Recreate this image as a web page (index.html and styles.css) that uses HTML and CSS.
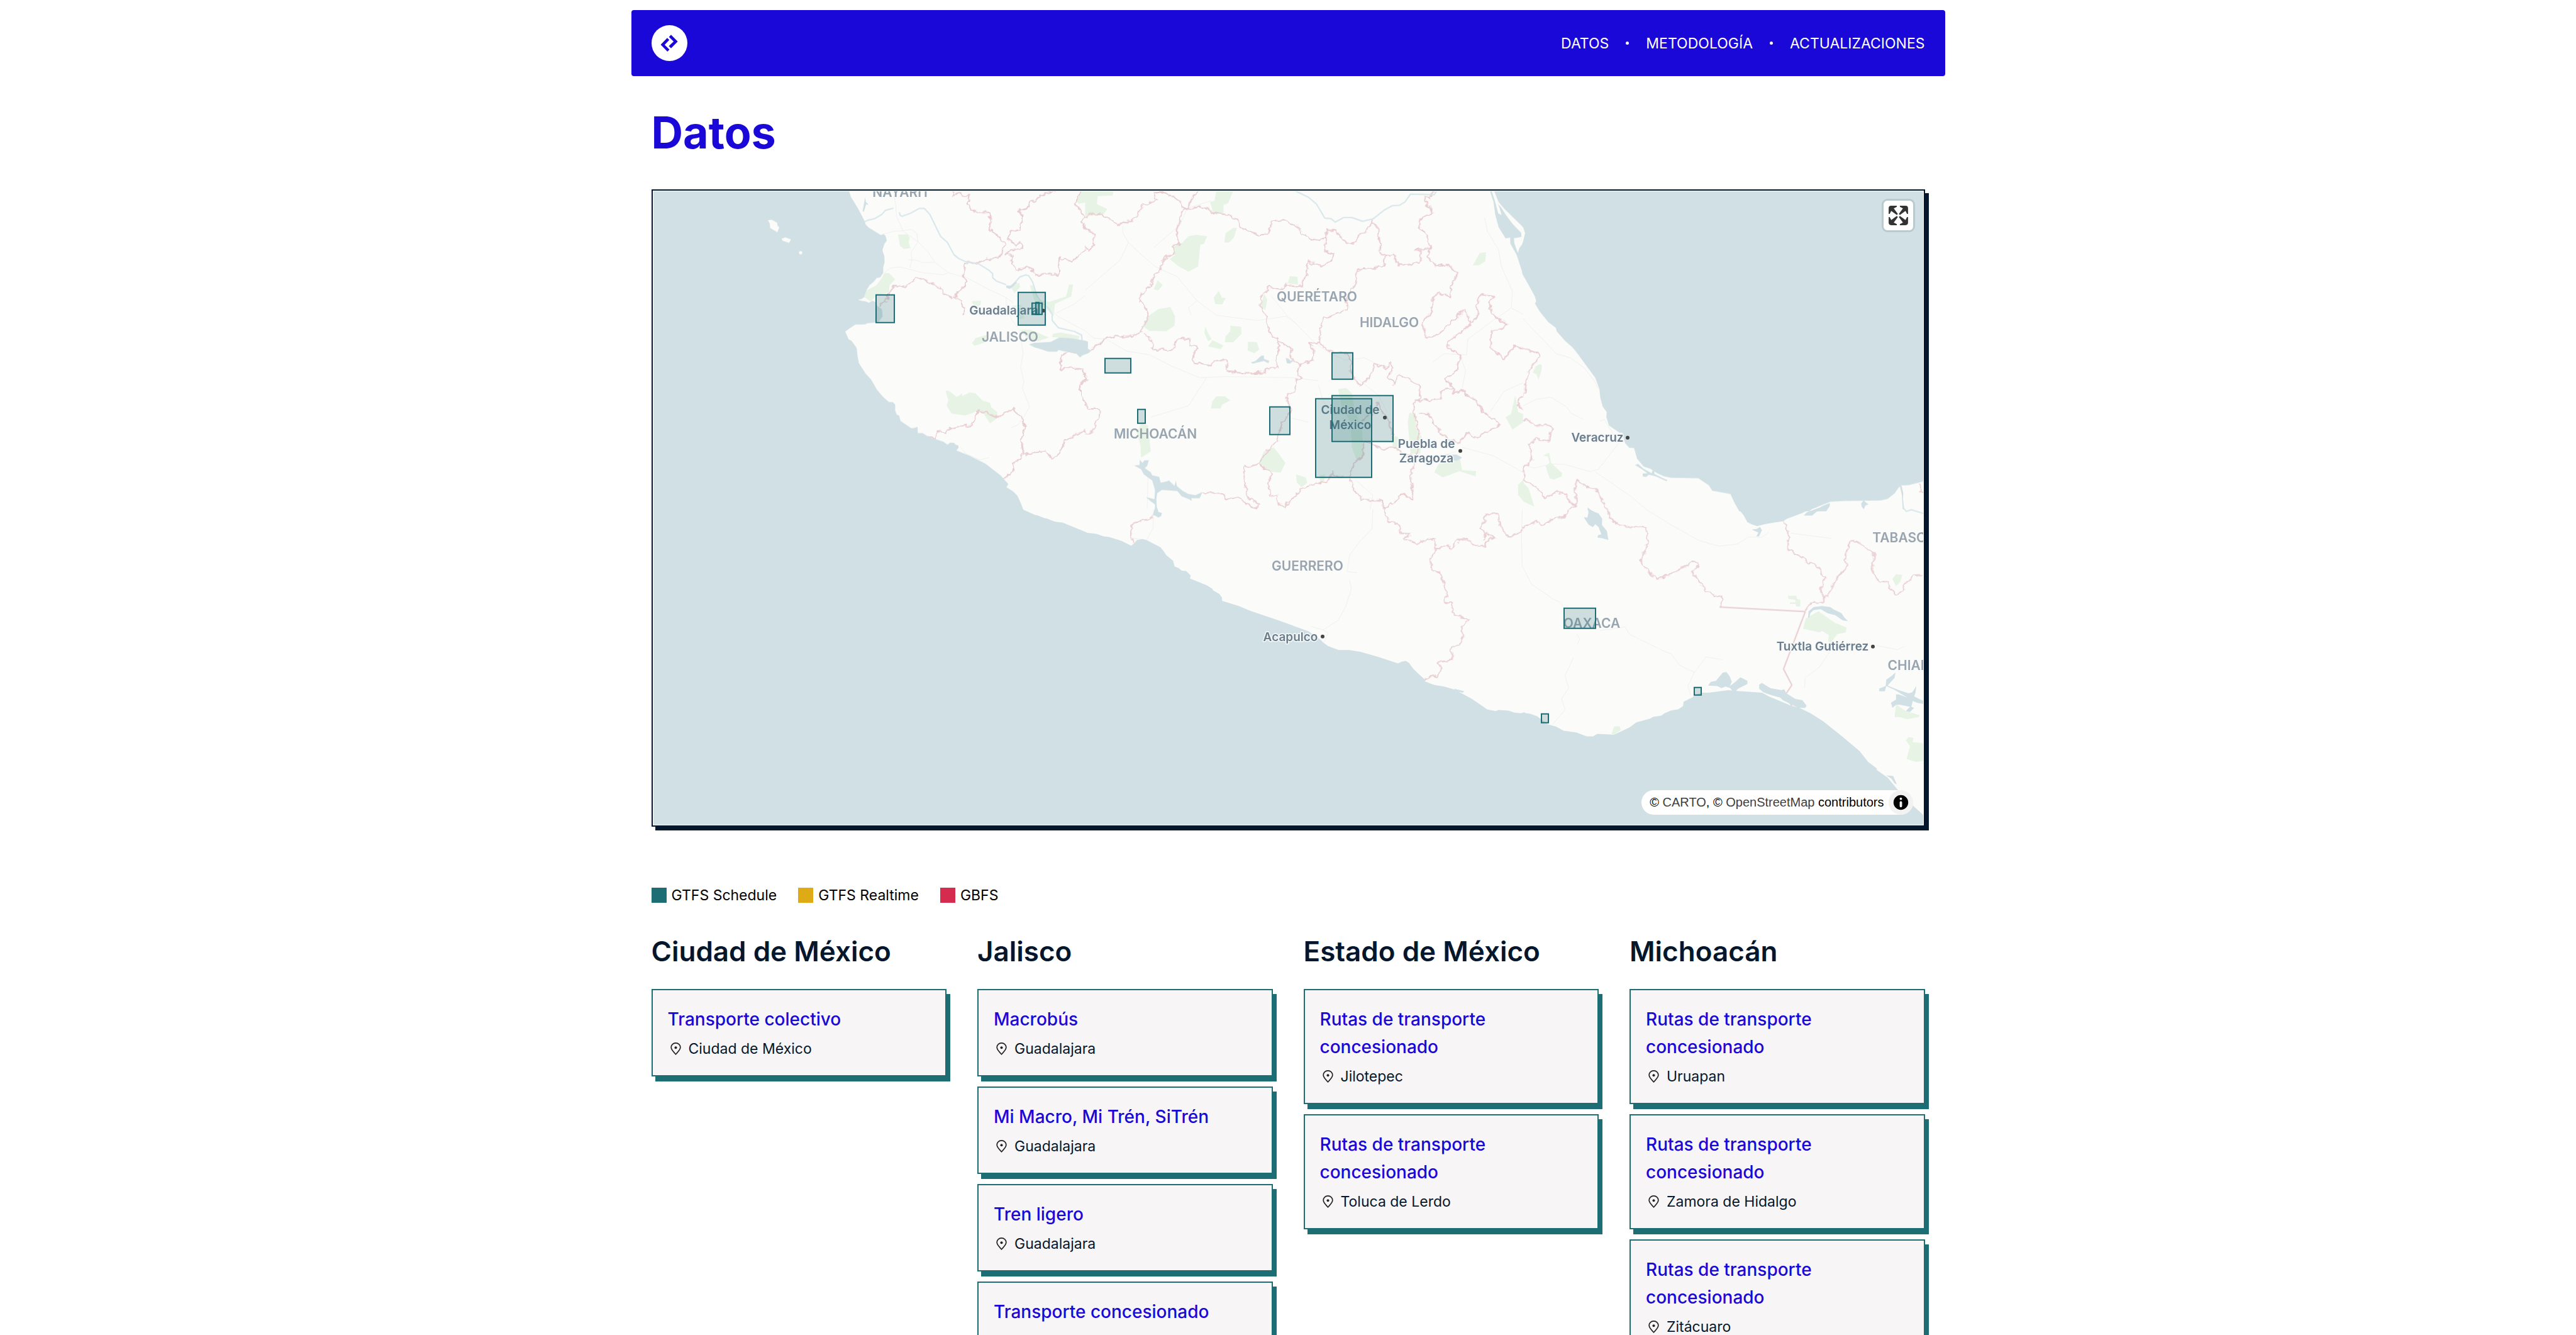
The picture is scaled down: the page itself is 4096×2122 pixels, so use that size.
FILE: index.html
```html
<!DOCTYPE html>
<html lang="es">
<head>
<meta charset="UTF-8">
<meta name="viewport" content="width=device-width, initial-scale=1.0">
<title>Datos</title>
<link rel="stylesheet" href="styles.css">
</head>
<body>

<!-- Shared icons -->
<svg class="sprite" aria-hidden="true">
  <symbol id="pin" viewBox="0 0 20 24">
    <path d="M10 22.600C7.500 19.400 1.200 14.600 1.200 9.400a8.800 8.400 0 0 1 17.600 0C18.800 14.600 12.500 19.400 10 22.600z" fill="none" stroke="#222" stroke-width="2"/>
    <circle cx="10" cy="9.800" r="2.400" fill="#222"/>
  </symbol>
</svg>

<header class="navbar">
  <a class="logo" href="#" aria-label="Inicio">
    <svg viewBox="27 30 208 208">
      <circle cx="131" cy="134" r="104" fill="#fff"/>
      <path d="M118 104l12 12-27 28 28 27-12 12-39-40z M140 86l39 39-39 39-13-13 28-26-27-27z" fill="#1908d8"/>
    </svg>
  </a>
  <nav class="menu">
    <a href="#">DATOS</a>
    <span class="dot"></span>
    <a href="#">METODOLOGÍA</a>
    <span class="dot"></span>
    <a href="#">ACTUALIZACIONES</a>
  </nav>
</header>

<main class="container">
  <h1>Datos</h1>

  <div class="map">
    <svg class="map-canvas" viewBox="1 2 2019 1007" preserveAspectRatio="xMidYMid slice">
      <defs>
        <filter id="rough" x="0" y="0" width="100%" height="100%">
          <feTurbulence type="fractalNoise" baseFrequency="0.12" numOctaves="2" result="noise"/>
          <feDisplacementMap in="SourceGraphic" in2="noise" scale="9" xChannelSelector="R" yChannelSelector="G"/>
        </filter>
      </defs>
      <rect class="land" width="2021" height="1009"/>

      <!-- Parks -->
      <g class="park">
        <g transform="translate(-8.900 -10.500) scale(.4441 .3305)">
          <path d="M898 247L932 246 940 262 936 285 943 312 918 316 905 300z M848 433L866 433 888 462 868 490 865 525 820 542 800 568 777 548 785 515 820 492 840 455z M1162 567L1195 564 1193 585 1180 597 1165 578z M1302 500L1332 478 1335 500 1315 528z M1370 492L1385 490 1400 560 1440 570 1500 545 1510 488 1525 487 1518 545 1460 580 1455 640 1430 605 1390 580z M1163 770L1175 745 1215 730 1212 765 1172 782z M1335 705L1375 705 1438 742 1400 760 1360 745z M1452 725L1480 718 1548 735 1545 752 1475 742 1450 740z M1305 590L1340 585 1350 650 1325 655z M1555 34L1570 34 1570 92 1545 98 1535 85z"/>
          <path d="M1068 998L1080 998 1108 1028 1129 1010 1127 1025 1155 1005 1175 1010 1200 1045 1228 1057 1232 1078 1253 1100 1253 1130 1227 1155 1205 1110 1180 1095 1165 1105 1137 1117 1090 1108 1072 1070 1078 1045z"/>
        </g>
        <g transform="translate(687.500 -10.500) scale(.4441 .3305)">
          <path d="M0 34L102 34 98 60 45 62 42 100 80 125 65 150 0 160z M470 34L530 36 512 95 495 105 495 145 460 147 447 90 463 85z M530 215L543 215 533 260 515 285 498 285 503 240z M370 255L400 248 437 255 425 292 412 295 405 400 370 425 335 400 303 365 320 345 312 300 345 290z M260 467L278 490 262 515 245 510z M478 518L490 550 503 553 490 583 465 580 460 550z M262 605L305 595 322 640 320 685 290 712 230 710 205 685 225 640z M430 688L440 720 453 750 440 760 427 720z M520 685L558 690 560 725 530 765 500 765 503 735 520 712z M455 755L495 780 485 798 440 785z M583 762L615 765 623 800 605 818 582 805z M733 447L760 450 762 488 725 480z M640 530L652 560 645 610 630 590z"/>
          <path d="M470 1025L500 1025 520 1045 490 1065 485 1083 450 1083 455 1050z M675 1270L695 1305 717 1345 700 1392 665 1388 622 1345 640 1290z M755 1400L790 1415 795 1440 775 1462 758 1440z M840 1405L860 1400 855 1440 840 1430z M1413 335L1435 332 1433 375 1410 395 1388 395z M1160 1105L1183 1105 1185 1180 1205 1220 1200 1300 1165 1300 1155 1150z M1340 1310L1350 1380 1400 1385 1398 1410 1340 1385 1280 1415 1250 1390 1265 1350z M1540 1020L1550 1100 1568 1110 1568 1150 1530 1185 1505 1125 1525 1110z M905 990L935 985 955 1010 965 1090 990 1180 1000 1310 970 1325 955 1270 950 1150 920 1080z M1103 1215L1120 1220 1118 1280 1100 1270z M200 1155L225 1165 235 1290 200 1320 198 1260 185 1200z M1550 1450L1570 1425 1570 1530 1550 1500z"/>
        </g>
        <g transform="translate(1383.900 -10.500) scale(.4441 .3305)">
          <path d="M60 870L67 875 65 905 55 945 48 920 35 910 45 880z M72 1310L93 1295 100 1345 140 1395 138 1410 110 1425 95 1420 80 1360 95 1345 88 1315z M0 1440L20 1468 40 1555 0 1530z"/>
        </g>
        <g transform="translate(1383.900 507.800) scale(.4441 .3305)">
          <path d="M1057 490L1115 545 1158 568 1155 593 1125 600 1100 645 1092 635 1095 605 1070 585 1062 592 1002 575 1012 525z M948 416L978 416 980 430 992 435 992 467 978 467 975 455 955 455 955 448 975 448 975 435 950 430z M1335 312L1358 315 1350 350 1335 370 1322 335z M1335 938L1370 970 1420 990 1415 1000 1375 1010 1350 1000 1330 1000z M1380 1095L1397 1100 1395 1120 1436 1125 1436 1210 1405 1215 1373 1200 1385 1140 1370 1110z M325 1045L345 1043 350 1062 325 1083 317 1080z"/>
        </g>
      </g>

      <!-- Roads -->
      <g class="road">
        <g transform="translate(-8.900 -10.500) scale(.4441 .3305)">
          <path d="M883 60L890 100 892 155 915 228 945 222 965 240 970 282 945 330 948 370 940 408 M845 245L880 232 915 228 970 282 1005 330 1030 380 1078 430 1150 458 1215 505 1285 550 1310 575 M850 430L870 408 905 403 985 430 1060 440 1078 430 M935 368L965 370 985 382 1030 380 M1285 550L1286 600 1305 655 1332 705 1346 815 1337 885 1349 955 1343 985 1369 1075 1350 1120 1330 1160 1303 1177 M1430 585L1470 640 1568 710 M1465 625L1530 580 1568 540 M1123 1270L1140 1300 1190 1330 1223 1320"/>
        </g>
        <g transform="translate(687.500 -10.500) scale(.4441 .3305)">
          <path d="M0 515L60 445 125 370 155 285 135 240 135 205 M155 285L190 330 250 400 330 450 400 565 470 635 615 660 720 640 755 675 820 765 880 820 M400 565L370 600 380 635 M0 710L30 745 75 750 150 808 230 825 310 880 410 935 500 930 740 935 835 950 M235 1125L370 1070 435 935 M665 540L725 640 760 680 M880 820L930 850 1000 840 1060 880 M835 970L850 1040 880 1110 M975 940L1050 1020 1080 1100 M1340 820L1362 900 1350 985 M1430 165L1440 230 1480 320 1490 400 1530 520 1525 600 1568 630 M1525 600L1450 670 1370 750 1365 825 1285 820 1245 860 M1350 1270L1460 1310 1568 1390 M1150 1350L1250 1320 1330 1290 M970 1430L1030 1500 1020 1568 M1568 960L1500 1000 1450 1100 M365 120L340 200 245 310 M365 120L450 85 M740 1130L800 1150 M225 1400L222 1568"/>
        </g>
        <g transform="translate(1383.900 -10.500) scale(.4441 .3305)">
          <path d="M0 650L35 705 70 750 118 820 170 840 220 890 255 950 270 990 M0 1070L50 1038 100 1030 155 1075 170 1105 215 1135 M275 1145L290 1135 320 1200 M360 1220L270 1375 240 1387 150 1353 100 1350 40 1370 0 1355 M258 1388L385 1505 440 1568"/>
        </g>
        <g transform="translate(687.500 507.800) scale(.4441 .3305)">
          <path d="M1030 0L1027 95 980 160 947 220 938 300 975 305 M947 340L953 385 932 470 905 535 852 580 870 595 855 640 M245 0L243 90 220 148 170 138 M808 563L852 580 M1565 0L1562 130 1565 280"/>
        </g>
        <g transform="translate(1383.900 507.800) scale(.4441 .3305)">
          <path d="M440 0L530 75 630 150 700 177 765 168 808 133 855 135 878 112 M0 280L30 360 105 430 135 450 145 475 M275 583L320 575 365 565 380 600 500 680 530 695 560 750 613 785 590 850 600 895 M613 785L655 710 713 723 M958 115L1105 140 M1110 660L1060 760 1010 810 1007 860 M1265 655L1340 675 1363 660 M180 715L150 800 163 860 138 910 150 965 105 1035 M192 600L203 625 193 650"/>
        </g>
      </g>

      <!-- State borders -->
      <g class="border" filter="url(#rough)">
        <g transform="translate(-8.900 -10.500) scale(.4441 .3305)">
          <path d="M1095 34L1097 58 1115 47 1135 63 1152 57 1147 105 1165 135 1222 141 1233 175 1225 220 1240 235 1282 290 1272 330 1255 363 1215 362 1190 382 1142 385 1133 440 1142 490 1118 515 1097 550 1120 560 1133 605 1129 630"/>
          <path d="M831 602L840 572 862 560 865 525 888 493 925 500 960 458 990 460 1000 477 1045 497 1065 533 1095 558"/>
          <path d="M1461 38L1425 50 1405 60 1393 83 1375 87 1355 125 1327 130 1345 155 1335 225 1300 232 1290 268 1322 300 1335 280 1345 312 1300 322 1284 340 1306 348 1300 375 1325 412 1370 405 1393 445 1425 435 1450 435 1472 437 1475 358 1520 378 1568 322"/>
          <path d="M1557 34L1530 100 1568 160 1553 185 1568 218"/>
          <path d="M1005 1218L1030 1232 1045 1190 1065 1200 1085 1180 1165 1162 1185 1090 1255 1125 1313 1085 1352 1160 1340 1250 1352 1305 1425 1288 1453 1327 1475 1300 1497 1235 1568 1190 M1352 1305L1308 1350 1313 1380 1295 1400 1278 1423"/>
          <path d="M1535 820L1510 815 1483 828 1480 895 1515 885 1558 898 1575 945 1548 970 1553 1020 1568 1045"/>
        </g>
        <g transform="translate(687.500 -10.500) scale(.4441 .3305)">
          <path d="M0 165L30 145 60 155 120 203 133 187 150 190 185 160 205 105 263 80 245 70 250 42 280 40 300 55 340 85 345 115 362 125 345 140 325 240 340 290 312 300 320 340 285 355 265 425 245 440 235 490 190 550 215 600 228 640 195 720 165 735 90 740 40 775 15 810"/>
          <path d="M362 125L380 90 385 60 405 40 M362 125L410 113 440 122 460 147 515 150 550 185 552 210 620 250 660 237 668 180 715 178 760 210 780 245 820 275 862 262 870 222 895 228 940 290 970 283 980 240 1005 235 1030 183 1048 215 1058 310 1050 330 1072 348 1105 338 1120 390 1150 395 1200 380 1203 325 1180 320 1240 310 1225 280 1225 250 1195 210 1197 180 1245 140 1225 105 1215 60 1235 70 1248 36"/>
          <path d="M862 262L858 330 890 340 880 370 848 400 800 375 790 440 775 495 720 485 705 510 660 500 630 545 628 590 650 640 658 715 690 755 695 800 683 840 690 885 650 890 645 910 575 915 510 905 505 850 465 850 450 878 390 865 385 820 403 790 375 775 370 747 330 750 310 800 245 800 228 740 210 722"/>
          <path d="M1240 310L1220 350 1260 400 1295 390 1333 430 1310 500 1308 550 1265 525 1245 560 1240 620 1205 675 1222 740 1240 742 1280 710 1360 605 1380 680 1300 760 1300 790 1345 825 1330 900 1290 940 1320 985 1275 1000 1270 1040 1185 1045"/>
          <path d="M1072 348L1070 395 1030 410 990 410 975 425 970 480 935 560 940 605 848 655 838 768 880 815 930 815 955 850 950 910 985 975 1020 930 1040 870 1080 890 1090 855 1102 890 1085 930 1105 965 1120 925 1150 930 1200 980 1195 1040 1175 1060 1180 1110 1195 1200 1190 1310 1165 1400 1175 1525 1135 1495 1120 1520 1070 1565"/>
          <path d="M838 768L805 770 818 800 815 850 770 872 735 840 740 795 695 760 M770 872L760 905 778 940 755 945 750 1000 720 1020 730 1070 742 1095 705 1150 690 1240 650 1290 620 1350 670 1395 655 1440 665 1500 685 1500 690 1535 712 1555 780 1465 870 1430 885 1390 905 1415 945 1410 965 1345 995 1310 1000 1240"/>
          <path d="M945 1410L965 1480 990 1520 1060 1525 1070 1568 M620 1350L590 1368 570 1355 568 1400 580 1510 625 1545 610 1563 570 1535 550 1508 510 1520 490 1495 475 1490 420 1487"/>
          <path d="M1380 680L1410 630 1400 600 1413 535 1465 548 1448 565 1450 600 1468 645 1510 675 1490 700 1455 710 1450 790 1500 845 1535 785 1568 790 M1000 1240L1060 1275 1105 1270 1150 1310 1185 1310"/>
          <path d="M1195 1105L1225 1105 1260 1180 1300 1230 1340 1245 1370 1200 1400 1225 1485 1160 1425 1100 1390 1030 1360 1020 1360 995 1320 1010 1320 985 M0 215L33 245 28 300 15 325 0 310 M0 1045L10 1085 50 1085 55 1105 20 1205 0 1200 M1568 1020L1545 1050 1565 1090 M985 1150L1030 1100 1050 1050 1055 1080 1085 1140 1100 1200 1100 1240"/>
        </g>
        <g transform="translate(1383.900 -10.500) scale(.4441 .3305)">
          <path d="M0 795L55 818 63 828 45 860 25 890 8 960 5 1015 M0 1135L30 1140 45 1165 90 1165 105 1180 95 1215 90 1240 45 1230 22 1260 30 1335 0 1370 5 1430 35 1450 60 1480 78 1518 120 1482 158 1500 160 1530 190 1550 185 1470 192 1433 240 1468 260 1470 300 1568 M190 1550L165 1568 M1415 1440L1425 1475 1433 1505"/>
        </g>
        <g transform="translate(687.500 507.800) scale(.4441 .3305)">
          <path d="M1068 0L1075 35 1088 38 1090 62 1120 70 1130 115 1162 120 1143 138 1190 165 1225 143 1253 145 1257 195 1235 235 1240 290 1268 303 1285 350 1293 410 1285 445 1312 450 1315 500 1376 533 1347 565 1355 610 1340 655 1307 670 1320 710 1300 728 1265 735 1275 770 1262 802 1240 800 1217 825"/>
          <path d="M1257 195L1297 172 1310 190 1335 148 1370 145 1400 175 1430 178 1450 140 1465 135 1440 112 1427 145 1432 112 1418 90 1435 25 1478 20 1485 70 1508 125 1533 128 1568 95 M242 38L220 50 175 62 163 95 163 140 177 160"/>
        </g>
        <g transform="translate(1383.900 507.800) scale(.4441 .3305)">
          <path d="M0 85L50 60 75 78 105 45 145 38 162 0 M300 0L312 40 345 80 437 87 448 160 420 245 450 300 478 333 520 320 610 248 630 270 603 298 658 395 713 422 705 470 M935 57L950 110 948 190 1005 240 1050 275 1083 325 1062 390 1083 420"/>
          <path d="M1008 492L1030 452 1070 445 1110 370 1115 340 1158 280 1153 230 1165 170 1183 148 1230 185 1257 215 1250 295 1275 345 1305 350 1310 380 1335 408 1357 395 1365 360 1400 317 1433 314"/>
        </g>
      </g>
      <g class="border" transform="translate(1383.900 507.800) scale(.4441 .3305)">
        <path d="M703 470L1010 492 932 768 962 845 942 885 M950 920L962 945"/>
      </g>

      <!-- Rivers -->
      <g class="river">
        <g transform="translate(-8.900 -10.500) scale(.4441 .3305)">
          <path d="M779 184L792 177 815 170 840 150 852 131 882 120 M903 140L905 153 912 159 942 145 975 121 992 121 1012 150 1050 255 1075 285 1098 343 1115 362 1145 380 1165 382 1187 388 1222 417 1237 435 1237 455 1250 470 1285 488 M1310 487L1335 450 1355 441 1366 445 1380 475 1395 540 1410 570 1440 605 1450 632 1450 660 1472 695 1530 713 1555 730 1557 755"/>
        </g>
        <g transform="translate(687.500 -10.500) scale(.4441 .3305)">
          <path d="M748 34L800 68 828 100 858 168 880 170 895 187 925 165 955 165 993 183 1030 172 1070 130 1100 108 1125 106 1145 90 1165 52 1250 55 1258 38"/>
        </g>
        <g transform="translate(1383.900 507.800) scale(.4441 .3305)">
          <path d="M1362 -5L1372 10 1390 2 1433 20"/>
        </g>
      </g>

      <!-- Sea, lakes and lagoons -->
      <g class="water">
        <g transform="translate(-8.900 -10.500) scale(.4441 .3305)">
          <path d="M0 20L720 20 722 34 729 65 755 122 779 184 782 198 793 213 836 249 846 245 853 252 858 276 850 290 842 322 849 350 850 380 845 405 845 432 834 453 822 455 812 473 796 490 785 515 777 548 768 557 755 560 768 566 780 567 794 575 806 565 816 570 824 590 840 605 843 640 830 665 818 670 788 673 780 679 745 680 727 696 709 713 721 750 731 757 750 792 753 830 758 865 782 915 802 945 822 992 842 1024 865 1052 880 1053 888 1065 888 1093 893 1112 902 1118 907 1143 945 1178 954 1178 968 1172 969 1202 985 1201 1008 1220 1060 1243 1075 1257 1085 1247 1100 1249 1102 1256 1114 1262 1115 1272 1107 1285 1150 1308 1210 1348 1265 1405 1293 1447 1286 1462 1310 1482 1326 1504 1338 1540 1348 1575 0 1575z"/>
          <path d="M1367 775L1385 768 1445 763 1475 742 1520 746 1568 757 1578 762 1578 818 1558 828 1550 838 1535 818 1490 808 1473 802 1467 810 1437 810 1385 788z M780 68L783 90 793 104 784 101 776 136 771 135 776 100z M1285 492L1300 493 1318 474 1325 478 1310 497 1298 508 1286 502z"/>
        </g>
        <g transform="translate(687.500 -10.500) scale(.4441 .3305)">
          <path d="M0 765L5 780 4 795 18 800 15 815 0 823z M593 862L610 855 630 830 640 828 640 845 660 855 655 865 640 855 600 868z M718 840L730 845 735 855 742 848 745 855 733 868 722 865z M1290 1305L1330 1305 1350 1320 1330 1335 1310 1328z"/>
          <path d="M175 1358L195 1355 195 1330 205 1345 212 1333 228 1332 222 1360 213 1370 235 1390 240 1405 265 1412 270 1440 290 1435 300 1430 320 1455 325 1430 328 1455 340 1470 350 1480 370 1495 395 1500 420 1485 410 1515 380 1515 382 1528 372 1520 345 1505 330 1480 275 1475 258 1490 255 1520 257 1575 250 1575 250 1545 235 1530 218 1510 235 1515 248 1520 250 1475 240 1430 225 1415 210 1400 200 1375z"/>
          <path d="M1459 20L1580 20 1580 218 1568 211 1540 175 1500 122 1480 90z M1449 36L1455 36 1466 80 1479 145 1491 153 1484 120 1478 100 1490 118 1505 150 1530 195 1561 238 1562 258 1535 265 1537 290 1549 335 1555 310 1570 285 1570 440 1566 432 1545 345 1522 290 1522 262 1505 265 1480 210 1468 150 1462 90z"/>
        </g>
        <g transform="translate(1383.900 -10.500) scale(.4441 .3305)">
          <path d="M-3 20L1445 20 1445 1430 1415 1440 1380 1452 1352 1453 1343 1467 1330 1492 1305 1518 1280 1526 1215 1527 1150 1528 1100 1532 1070 1548 1033 1568 1025 1578 774 1578 758 1540 742 1495 677 1479 665 1453 627 1419 530 1417 505 1410 480 1395 455 1373 432 1363 408 1325 397 1273 380 1272 365 1250 355 1200 345 1200 307 1165 298 1125 299 1100 285 1075 276 1030 273 990 258 935 225 875 195 820 177 790 150 758 120 712 117 695 90 668 60 618 42 578 47 568 42 545 20 490 -3 436 -3 290 0 280 7 240 0 212 -3 208z"/>
          <path d="M400 1355L412 1350 430 1372 460 1395 463 1382 470 1383 470 1398 500 1418 517 1428 513 1433 475 1410 450 1402 440 1413 428 1410 428 1396 445 1395 425 1375z M1040 1578L1070 1553 1098 1538 1098 1552 1085 1578z M1210 1540L1220 1524 1224 1532 1237 1545 1225 1550 1220 1568 1212 1555z M1348 1452L1355 1455 1361 1490 1360 1520 1364 1568 1359 1568 1356 1500z M230 1572L234 1562 242 1572z"/>
        </g>
        <g transform="translate(-8.900 507.800) scale(.4441 .3305)">
          <path d="M-5 -8L1340 -8 1347 2 1390 28 1393 27 1425 44 1430 44 1455 57 1465 60 1488 64 1568 108 1574 112 1574 1520 -5 1520z"/>
        </g>
        <g transform="translate(687.500 507.800) scale(.4441 .3305)">
          <path d="M0 112L40 118 65 130 85 133 130 152 165 175 177 162 185 148 205 143 222 150 270 183 283 205 290 220 315 248 320 275 335 283 345 295 362 297 378 318 375 333 435 365 455 382 458 390 480 407 490 425 490 440 550 465 590 488 690 533 800 587 812 598 845 630 850 638 870 658 908 677 945 677 985 685 1050 710 1120 741 1133 733 1148 729 1160 740 1175 768 1213 815 1217 828 1250 845 1285 852 1325 868 1385 912 1440 963 1470 970 1480 965 1515 968 1535 977 1560 981 1574 976 1574 1520 -5 1520z"/>
          <path d="M1320 862L1357 875 1352 882 1330 875z M250 -8L258 -8 262 12 275 18 272 32 262 40 250 30 242 28z"/>
        </g>
        <g transform="translate(1383.900 507.800) scale(.4441 .3305)">
          <path d="M768 -8L775 4 790 30 803 62 820 73 838 81 870 70 930 57 945 45 995 20 1040 -8z M1005 30L1015 15 1045 0 1060 -8 1085 -8 1085 0 1050 12 1035 30z M820 97L835 95 848 85 855 100 845 130 835 130 842 112 822 100z"/>
          <path d="M-3 978L25 983 50 995 90 1035 118 1045 145 1065 190 1073 228 1092 250 1092 265 1080 325 1084 380 1050 405 1025 455 1007 465 998 495 992 505 982 530 967 555 962 572 947 575 925 605 905 615 893 640 882 665 882 735 870 755 873 855 882 880 900 960 945 990 955 1030 982 1075 1020 1140 1090 1205 1163 1235 1215 1265 1245 1267 1255 1305 1290 1340 1347 1370 1395 1400 1430 1445 1485 1445 1525 -3 1525z"/>
          <path d="M217 38L230 40 234 15 230 -8 245 5 255 12 270 20 283 45 282 75 300 105 305 147 285 140 266 135 268 125 280 120 270 85 258 72 250 85 235 75 225 55z"/>
          <path d="M662 848L672 830 690 825 715 785 728 783 740 805 747 830 740 850 760 830 778 808 803 825 803 840 770 862 760 876 750 876 742 860 725 852 710 860 695 850z M845 843L855 835 885 860 925 870 935 865 942 885 975 912 1000 918 1015 945 1010 955 985 955 955 935 930 918 920 905 890 895 860 880 845 862z"/>
          <path d="M1020 520L1022 490 1040 470 1070 465 1100 470 1110 480 1140 500 1150 520 1163 538 1145 535 1118 510 1090 500 1065 480 1040 485 1028 500 1025 520z M1333 785L1330 810 1305 848 1345 870 1380 885 1393 880 1408 850 1405 880 1400 900 1430 920 1436 920 1436 937 1410 930 1395 922 1390 950 1400 955 1385 975 1370 970 1385 950 1350 940 1335 940 1322 955 1317 930 1335 915 1335 890 1345 890 1375 905 1330 868 1300 850 1295 875 1275 875 1275 862 1298 850 1300 820 1320 800z M1300 1280L1325 1283 1338 1323 1330 1318 1318 1295z"/>
        </g>
      </g>

      <!-- Islas Marías -->
      <g class="land" transform="translate(-8.900 -10.500) scale(.4441 .3305)">
        <path d="M432 177L447 176 465 190 467 205 473 212 466 236 440 215 439 195z M481 267L494 260 515 270 508 287 485 277z M543 330L550 325 556 332 553 342 545 341z"/>
      </g>

      <!-- Labels -->
      <g class="state">
        <text x="395" y="11">NAYARIT</text>
        <text x="568" y="241">JALISCO</text>
        <text x="1056" y="177">QUERÉTARO</text>
        <text x="1171" y="218">HIDALGO</text>
        <text x="799" y="395">MICHOACÁN</text>
        <text x="1041" y="605">GUERRERO</text>
        <text x="1493" y="696">OAXACA</text>
        <text x="1990" y="560">TABASCO</text>
        <text x="2010" y="763">CHIAPAS</text>
      </g>
      <g class="city">
        <text x="558" y="198">Guadalajara</text>
        <text x="1109" y="356">Ciudad de</text>
        <text x="1109" y="380">México</text>
        <text x="1230" y="410">Puebla de</text>
        <text x="1230" y="433">Zaragoza</text>
        <text x="1502" y="400">Veracruz</text>
        <text x="1014" y="717">Acapulco</text>
        <text x="1860" y="732">Tuxtla Gutiérrez</text>
      </g>
      <g class="city-dot">
        <circle cx="621" cy="192" r="3"/>
        <circle cx="1164" cy="362" r="3"/>
        <circle cx="1284" cy="415" r="3"/>
        <circle cx="1550" cy="394" r="3"/>
        <circle cx="1065" cy="710" r="3"/>
        <circle cx="1940" cy="726" r="3"/>
      </g>

      <!-- Dataset extents -->
      <g class="extent">
        <rect x="355" y="167" width="29" height="44"/>
        <rect x="581" y="163" width="43" height="52"/>
        <rect x="603" y="180" width="16" height="18"/>
        <rect x="609" y="179" width="5" height="19"/>
        <rect x="719" y="268" width="41" height="23"/>
        <rect x="771" y="349" width="12" height="22"/>
        <rect x="981" y="345" width="32" height="44"/>
        <rect x="1080" y="259" width="33" height="42"/>
        <rect x="1080" y="327" width="97" height="73"/>
        <rect x="1054" y="332" width="89" height="125"/>
        <rect x="1449" y="665" width="50" height="32"/>
        <rect x="1413" y="833" width="11" height="14"/>
        <rect x="1656" y="791" width="11" height="12"/>
      </g>
    </svg>

    <button class="fullscreen" type="button" aria-label="Pantalla completa">
      <svg viewBox="0 0 29 29"><path fill="#333" d="M24 16v5.500c0 1.750-.750 2.500-2.500 2.500H16v-1l3-1.500-4-5.500 1-1 5.500 4 1.500-3h1zM6 16l1.500 3 5.500-4 1 1-4 5.500 3 1.500v1H7.500C5.750 24 5 23.250 5 21.500V16h1zm7-11v1l-3 1.500 4 5.500-1 1-5.500-4L6 13H5V7.500C5 5.750 5.750 5 7.500 5H13zm11 2.500c0-1.750-.750-2.500-2.500-2.500H16v1l3 1.500-4 5.500 1 1 5.500-4 1.500 3h1V7.500z"/></svg>
    </button>

    <div class="attribution">
      <span>© <a href="#">CARTO</a>, © <a href="#">OpenStreetMap</a> contributors</span>
      <button class="info" type="button" aria-label="Atribución">
        <svg viewBox="0 0 20 20"><path fill-rule="evenodd" d="M4 10a6 6 0 1 0 12 0 6 6 0 1 0-12 0m5-3a1 1 0 1 0 2 0 1 1 0 1 0-2 0m0 3a1 1 0 1 1 2 0v3a1 1 0 1 1-2 0"/></svg>
      </button>
    </div>
  </div>

  <ul class="legend">
    <li><span class="swatch schedule"></span>GTFS Schedule</li>
    <li><span class="swatch realtime"></span>GTFS Realtime</li>
    <li><span class="swatch gbfs"></span>GBFS</li>
  </ul>

  <div class="states">
    <section>
      <h2>Ciudad de México</h2>
      <article class="card">
        <h3><a href="#">Transporte colectivo</a></h3>
        <p><svg><use href="#pin"/></svg>Ciudad de México</p>
      </article>
    </section>

    <section>
      <h2>Jalisco</h2>
      <article class="card">
        <h3><a href="#">Macrobús</a></h3>
        <p><svg><use href="#pin"/></svg>Guadalajara</p>
      </article>
      <article class="card">
        <h3><a href="#">Mi Macro, Mi Trén, SiTrén</a></h3>
        <p><svg><use href="#pin"/></svg>Guadalajara</p>
      </article>
      <article class="card">
        <h3><a href="#">Tren ligero</a></h3>
        <p><svg><use href="#pin"/></svg>Guadalajara</p>
      </article>
      <article class="card">
        <h3><a href="#">Transporte concesionado</a></h3>
        <p><svg><use href="#pin"/></svg>Guadalajara</p>
      </article>
    </section>

    <section>
      <h2>Estado de México</h2>
      <article class="card">
        <h3><a href="#">Rutas de transporte concesionado</a></h3>
        <p><svg><use href="#pin"/></svg>Jilotepec</p>
      </article>
      <article class="card">
        <h3><a href="#">Rutas de transporte concesionado</a></h3>
        <p><svg><use href="#pin"/></svg>Toluca de Lerdo</p>
      </article>
    </section>

    <section>
      <h2>Michoacán</h2>
      <article class="card">
        <h3><a href="#">Rutas de transporte concesionado</a></h3>
        <p><svg><use href="#pin"/></svg>Uruapan</p>
      </article>
      <article class="card">
        <h3><a href="#">Rutas de transporte concesionado</a></h3>
        <p><svg><use href="#pin"/></svg>Zamora de Hidalgo</p>
      </article>
      <article class="card">
        <h3><a href="#">Rutas de transporte concesionado</a></h3>
        <p><svg><use href="#pin"/></svg>Zitácuaro</p>
      </article>
    </section>
  </div>
</main>

</body>
</html>
```
FILE: styles.css
```css
* {
  box-sizing: border-box;
}

body {
  margin: 0;
  padding: 16px;
  background-color: #fff;
  color: #04172c;
  font-family: Inter, "Liberation Sans", sans-serif;
  font-size: 23px;
  line-height: 36px;
}

a {
  text-decoration: none;
}

h1, h2, h3, p, ul {
  margin: 0;
  padding: 0;
}

.sprite {
  position: absolute;
  width: 0;
  height: 0;
}

/* Navbar */
.navbar {
  display: flex;
  align-items: center;
  justify-content: space-between;
  max-width: 2089px;
  margin: 0 auto;
  padding: 24px 32px;
  background-color: #1908d8;
  border-radius: 4px;
}

.logo svg {
  display: block;
  width: 57px;
  height: 57px;
}

.menu {
  display: flex;
  align-items: center;
  gap: 27px;
}

.menu a {
  color: #fff;
}

.dot {
  width: 5px;
  height: 5px;
  border-radius: 50%;
  background-color: #fff;
}

.container {
  max-width: 2025px;
  margin: 0 auto;
}

h1 {
  margin: 47px 0;
  color: #1908d8;
  font-size: 70px;
  font-weight: 700;
  line-height: 86px;
}

/* Map */
.map {
  position: relative;
  aspect-ratio: 2 / 1;
  padding: 1px;
  background-color: #fff;
  border: 2px solid #04172c;
  box-shadow: 6px 6px 0 #04172c;
}

.map-canvas {
  display: block;
  width: 100%;
  height: 100%;
}

.land {
  fill: #fbfbf9;
}

.water {
  fill: #d1e0e4;
}

.park {
  fill: #e7f4e5;
}

.road, .border, .river {
  fill: none;
}

.road path, .border path, .river path {
  vector-effect: non-scaling-stroke;
  stroke-linejoin: round;
}

.road {
  stroke: #f0f1f0;
  stroke-width: 1px;
}

.border {
  stroke: #e8cbcf;
  stroke-width: 2px;
}

.river {
  stroke: #d6e6ea;
  stroke-width: 2px;
}

.state, .city {
  font-size: 21px;
  font-weight: 600;
  text-anchor: middle;
}

.state {
  fill: #98a5b0;
}

.city {
  fill: #6b7d8c;
  font-size: 19px;
  paint-order: stroke;
  stroke: #f6f9f9;
  stroke-width: 3px;
  stroke-linejoin: round;
}

.city-dot {
  fill: #444;
}

.extent rect {
  fill: rgba(28, 109, 116, 0.2);
  stroke: #1c6d74;
  stroke-width: 2px;
}

.fullscreen {
  position: absolute;
  top: 13px;
  right: 14px;
  padding: 0;
  border: 3px solid #bbcacd;
  border-radius: 9px;
  background-color: #fff;
  cursor: pointer;
}

.fullscreen svg {
  display: block;
  width: 47px;
  height: 47px;
}

.attribution {
  position: absolute;
  right: 17px;
  bottom: 17px;
  display: flex;
  align-items: center;
  gap: 7px;
  padding-left: 13px;
  border-radius: 20px;
  background-color: #fff;
  color: #000;
  font-family: "Liberation Sans", Arial, sans-serif;
  font-size: 20px;
}

.attribution a {
  color: #404040;
}

.info {
  padding: 0;
  border: none;
  border-radius: 50%;
  background-color: #f2f2f2;
  cursor: pointer;
}

.info svg {
  display: block;
  width: 39px;
  height: 39px;
}

/* Legend */
.legend {
  display: flex;
  gap: 34px;
  margin-top: 91px;
  color: #000;
  list-style: none;
}

.legend li {
  display: flex;
  align-items: center;
  gap: 8px;
}

.swatch {
  width: 24px;
  height: 24px;
}

.schedule {
  background-color: #1c6d74;
}

.realtime {
  background-color: #deab16;
}

.gbfs {
  background-color: #d52b4f;
}

/* Cards */
.states {
  display: grid;
  grid-template-columns: repeat(4, 1fr);
  align-items: start;
  gap: 49px;
  margin-top: 41px;
}

section {
  display: flex;
  flex-direction: column;
  gap: 16px;
}

h2 {
  margin-bottom: 14px;
  font-size: 44px;
  font-weight: 600;
  line-height: 60px;
}

.card {
  padding: 24px;
  border: 2px solid #1c6d74;
  background-color: #f7f5f6;
  box-shadow: 6px 8px 0 #1c6d74;
}

.card h3 {
  margin-bottom: 8px;
  font-size: 28px;
  font-weight: 500;
  line-height: 44px;
}

.card h3 a {
  color: #1908d8;
}

.card p {
  display: flex;
  align-items: center;
  gap: 12px;
  padding-left: 4px;
  line-height: 35px;
}

.card p svg {
  width: 17px;
  height: 20px;
}
```
